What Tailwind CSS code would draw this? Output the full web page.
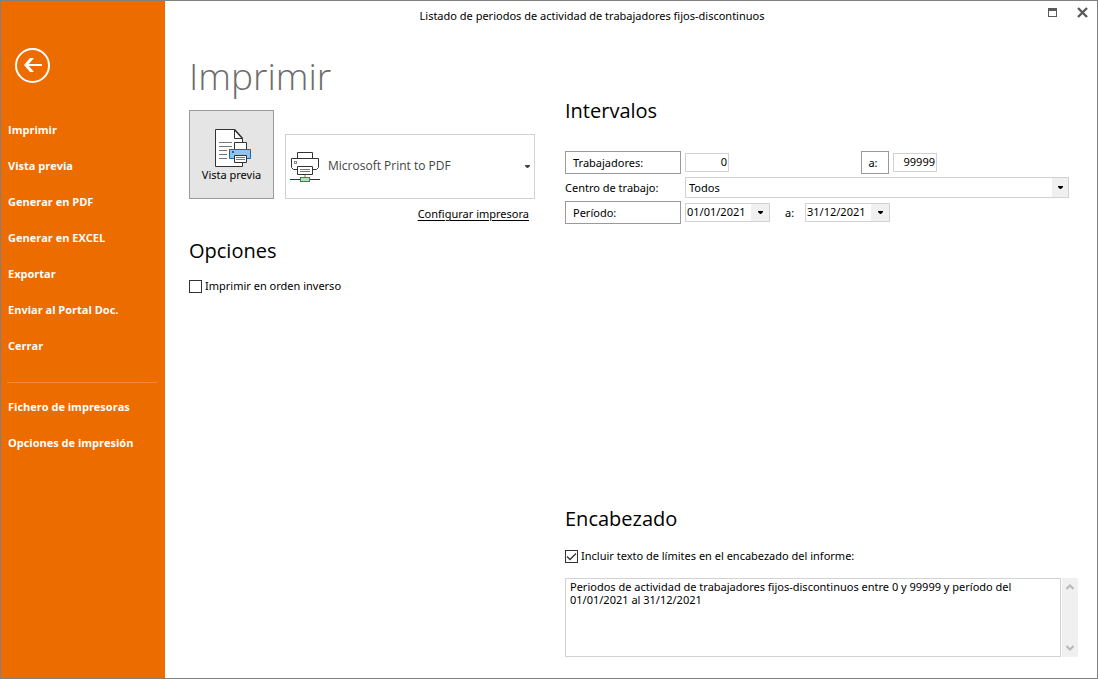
<!DOCTYPE html>
<html lang="es">
<head>
<meta charset="utf-8">
<meta name="viewport" content="width=device-width, initial-scale=1">
<title>Imprimir</title>
<script src="https://cdn.jsdelivr.net/npm/@tailwindcss/browser@4"></script>
</head>
<body class="bg-white font-['Noto_Sans','Open_Sans',sans-serif] text-[11px] leading-4 text-black">
<div class="flex min-h-screen border border-[#808080]">
  <aside class="flex w-41 shrink-0 flex-col bg-[#ec6c00] pt-[47px] font-['Open_Sans',sans-serif] text-[11px] font-bold text-white">
    <button type="button" aria-label="Volver" class="ml-[14px] size-[35px]">
      <svg viewBox="0 0 35 35" class="size-full" fill="none" stroke="#fff"><circle cx="17.5" cy="17.5" r="16.5" stroke-width="2"/><path d="M10 17H27" stroke-width="2"/><path d="M9 17L15 10H19L13 17L19 24H15Z" fill="#fff" stroke="none"/></svg>
    </button>
    <nav class="mt-[29px] flex flex-col">
      <a href="#" class="flex h-9 items-center pl-[7px]">Imprimir</a>
      <a href="#" class="flex h-9 items-center pl-[7px]">Vista previa</a>
      <a href="#" class="flex h-9 items-center pl-[7px]">Generar en PDF</a>
      <a href="#" class="flex h-9 items-center pl-[7px]">Generar en EXCEL</a>
      <a href="#" class="flex h-9 items-center pl-[7px]">Exportar</a>
      <a href="#" class="flex h-9 items-center pl-[7px]">Enviar al Portal Doc.</a>
      <a href="#" class="flex h-9 items-center pl-[7px]">Cerrar</a>
      <hr class="mt-[18px] mr-2 mb-1.5 ml-1.5 border-[#f08a3c]">
      <a href="#" class="flex h-9 items-center pl-[7px]">Fichero de impresoras</a>
      <a href="#" class="flex h-9 items-center pl-[7px]">Opciones de impresión</a>
    </nav>
  </aside>

  <div class="flex min-w-0 flex-1 flex-col">
    <header class="flex h-[30px] items-center">
      <p class="flex-1 text-center text-[11px]">Listado de periodos de actividad de trabajadores fijos-discontinuos</p>
      <div class="flex w-[78px] justify-end gap-5 self-start pt-1.5 pr-[9px]">
        <button type="button" aria-label="Maximizar"><svg viewBox="0 0 9 11" class="h-[11px] w-[9px]" fill="none" stroke="#5a5a5a" shape-rendering="crispEdges"><rect x=".5" y="1.500" width="8" height="8"/><path d="M0 2.500H9" stroke-width="3"/></svg></button>
        <button type="button" aria-label="Cerrar ventana"><svg viewBox="0 0 11 11" class="size-[11px]" fill="none" stroke="#5a5a5a" stroke-width="2.400"><path d="M1 1L10 10M10 1L1 10"/></svg></button>
      </div>
    </header>

    <main class="flex flex-1 gap-[30px] pr-[19px] pb-[21px] pl-6">
      <section class="w-[346px] shrink-0">
        <h1 class="mt-[19px] mb-2 font-['Open_Sans',sans-serif] text-[37px] leading-[52px] font-light text-[#6c6c6c]">Imprimir</h1>
        <div class="flex items-end gap-[11px]">
          <button type="button" class="flex h-[89px] w-[85px] flex-col items-center border border-[#9a9a9a] bg-[#e5e5e5] pt-[18px] text-[11px]">
            <svg viewBox="0 0 36 38" class="ml-[3px] h-[38px] w-9" fill="none" stroke="#333">
              <path d="M.5 .5H19.500L27.500 9.500V37.500H.5Z" fill="#fff"/>
              <path d="M19.500 .5V9.500H27.500"/><path d="M19.500 .5L27.500 9.500" stroke-width="1.500"/>
              <path d="M4 13.500H17M4 17.500H17M4 21.500H12M4 25.500H12M4 29.500H12" stroke="#777"/>
              <path d="M19.500 13.500H31.500V21H19.500Z" fill="#fff"/>
              <path d="M14.500 20.500H35.500V29.500H14.500Z" fill="#90c4ee" stroke="#1668b0"/>
              <path d="M17 23H19" stroke="#1668b0" stroke-width="2"/>
              <path d="M19.500 26.500H31.500V33.500H19.500Z" fill="#fff"/>
              <path d="M21 28.500H30M21 30.500H30" stroke="#777"/>
            </svg>
            Vista previa
          </button>
          <label class="grid h-[65px] w-[250px] items-center">
            <select aria-label="Impresora" class="col-start-1 row-start-1 h-full w-full appearance-none border border-[#d2d2d2] bg-white pb-0.5 pl-[42px] font-['Open_Sans',sans-serif] text-[12px] text-[#444] outline-none"><option>Microsoft Print to PDF</option></select>
            <svg viewBox="0 0 30 32" class="pointer-events-none col-start-1 row-start-1 ml-[5px] h-8 w-[30px]" fill="none" stroke="#333">
              <path d="M7.500 7V1.500H22.500V7" fill="#fff"/>
              <path d="M7 18.500H3.500L1.500 16.500V7.500H28.500V16.500L26.500 18.500H23" fill="#fff"/>
              <rect x="4.500" y="10.500" width="2" height="2" stroke="#888"/>
              <path d="M7.500 15.500H22.500V23.500H7.500Z" fill="#fff"/>
              <path d="M10 18.500H20M10 20.500H20" stroke="#777"/>
              <path d="M15 24V26" stroke="#bbb" stroke-width="2"/>
              <path d="M0 28.500H30"/><rect x="10.500" y="26.500" width="9" height="4" fill="#b9dfc0" stroke="#14984a"/>
            </svg>
            <svg viewBox="0 0 5 3" class="pointer-events-none col-start-1 row-start-1 mr-[5px] h-[3px] w-[5px] justify-self-end"><path d="M0 0H5V1L3 3H2L0 1Z" fill="#444"/></svg>
          </label>
        </div>
        <div class="mt-[7px] flex justify-end pr-1.5"><a href="#" class="text-[11px] underline underline-offset-2">Configurar impresora</a></div>
        <h2 class="mt-[15px] font-['Open_Sans',sans-serif] text-[20px] leading-7">Opciones</h2>
        <label class="mt-[13px] flex items-center gap-[3px]">
          <input type="checkbox" class="size-[13px] appearance-none border border-[#333] bg-white">Imprimir en orden inverso
        </label>
      </section>

      <section class="flex min-w-0 flex-1 flex-col pt-[66px]">
        <h2 class="font-['Open_Sans',sans-serif] text-[20px] leading-7">Intervalos</h2>
        <div class="mt-[25px] flex h-[25px] items-center gap-1">
          <button type="button" class="h-[23px] w-29 border border-[#9a9a9a] pl-[7px] text-left">Trabajadores:</button>
          <input type="text" aria-label="Trabajadores desde" value="0" class="h-[19px] w-11 border border-[#d2d2d2] pr-px pb-0.5 text-right outline-none">
          <button type="button" class="ml-32 h-[23px] w-7 border border-[#9a9a9a] pr-1">a:</button>
          <input type="text" aria-label="Trabajadores hasta" value="99999" class="h-[19px] w-11 border border-[#d2d2d2] pr-px pb-0.5 text-right outline-none">
        </div>
        <div class="flex h-[25px] items-center gap-1 pr-[9px]">
          <label for="centro" class="w-29">Centro de trabajo:</label>
          <div class="grid h-[21px] flex-1 items-center">
            <select id="centro" class="col-start-1 row-start-1 h-full w-full appearance-none border border-[#d2d2d2] bg-white pl-[3px] outline-none"><option>Todos</option></select>
            <span class="pointer-events-none col-start-1 row-start-1 mr-px flex h-[19px] w-4 items-center justify-center justify-self-end bg-[#f0f0f0]"><svg viewBox="0 0 5 3" class="h-[3px] w-[5px]"><path d="M0 0H5V1L3 3H2L0 1Z"/></svg></span>
          </div>
        </div>
        <div class="flex h-[25px] items-center">
          <button type="button" class="mr-1 h-[23px] w-29 border border-[#9a9a9a] pl-[7px] text-left">Período:</button>
          <div class="flex h-[19px] w-[85px] border border-[#d2d2d2]">
            <input type="text" aria-label="Período desde" value="01/01/2021" class="min-w-0 flex-1 pb-0.5 pl-px outline-none">
            <button type="button" aria-label="Elegir fecha inicial" class="flex w-[18px] items-center justify-center bg-[#f0f0f0]"><svg viewBox="0 0 5 3" class="h-[3px] w-[5px]"><path d="M0 0H5V1L3 3H2L0 1Z"/></svg></button>
          </div>
          <span class="w-[35px] pl-[15px]">a:</span>
          <div class="flex h-[19px] w-[85px] border border-[#d2d2d2]">
            <input type="text" aria-label="Período hasta" value="31/12/2021" class="min-w-0 flex-1 pb-0.5 pl-px outline-none">
            <button type="button" aria-label="Elegir fecha final" class="flex w-[18px] items-center justify-center bg-[#f0f0f0]"><svg viewBox="0 0 5 3" class="h-[3px] w-[5px]"><path d="M0 0H5V1L3 3H2L0 1Z"/></svg></button>
          </div>
        </div>

        <h2 class="mt-auto pt-6 font-['Open_Sans',sans-serif] text-[20px] leading-7">Encabezado</h2>
        <label class="mt-[15px] flex items-center gap-[3px]">
          <span class="grid">
            <input type="checkbox" checked class="col-start-1 row-start-1 size-[13px] appearance-none border border-[#333] bg-white">
            <svg viewBox="0 0 13 13" class="pointer-events-none col-start-1 row-start-1 size-[13px]" fill="none" stroke="#333" stroke-width="1.300"><path d="M2 6.500L5 9.500L11 3.500"/></svg>
          </span>Incluir texto de límites en el encabezado del informe:
        </label>
        <div class="mt-3.5 flex h-[79px] gap-px">
          <textarea aria-label="Texto del encabezado" class="min-w-0 flex-1 resize-none overflow-hidden border border-[#d2d2d2] px-1 pt-px leading-[13px] outline-none">Periodos de actividad de trabajadores fijos-discontinuos entre 0 y 99999 y período del 01/01/2021 al 31/12/2021</textarea>
          <div class="flex w-4 flex-col items-center justify-between bg-[#f0f0f0] py-1.5">
            <button type="button" aria-label="Subir"><svg viewBox="0 0 8 6" class="h-1.5 w-2" fill="none" stroke="#b8b8b8" stroke-width="2"><path d="M.5 5L4 1.500L7.500 5"/></svg></button>
            <button type="button" aria-label="Bajar"><svg viewBox="0 0 8 6" class="h-1.5 w-2" fill="none" stroke="#b8b8b8" stroke-width="2"><path d="M.5 1L4 4.500L7.500 1"/></svg></button>
          </div>
        </div>
      </section>
    </main>
  </div>
</div>
</body>
</html>
